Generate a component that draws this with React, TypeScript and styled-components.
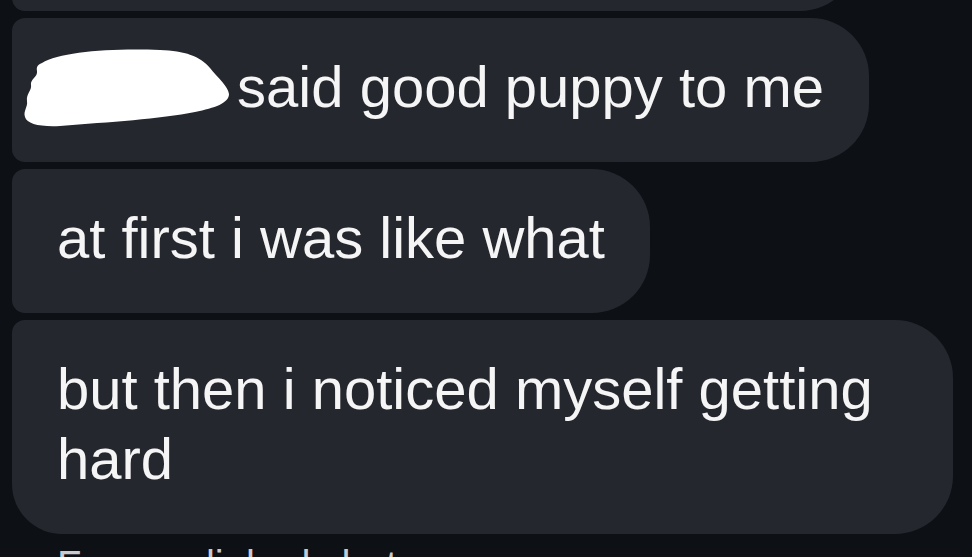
import React from "react";
import styled, { createGlobalStyle } from "styled-components";

const GlobalStyle = createGlobalStyle`
  html, body {
    margin: 0;
    padding: 0;
    background: #0d1015;
    overflow: hidden;
  }
  body {
    font-family: "Liberation Sans", Arial, sans-serif;
    -webkit-font-smoothing: antialiased;
  }
`;

const Thread = styled.div`
  display: flex;
  flex-direction: column;
  align-items: flex-start;
  gap: 7px;
  padding-left: 12px;
  width: 972px;
  height: 557px;
  box-sizing: border-box;
  overflow: hidden;

  & > * {
    flex-shrink: 0;
  }
`;

const Bubble = styled.div<{ $last?: boolean }>`
  position: relative;
  box-sizing: border-box;
  max-width: 941px;
  background: #25272e;
  color: #f5f5f6;
  font-size: 58px;
  line-height: 70px;
  padding: 34px 45px 40px 45px;
  border-radius: 13px 58px 58px ${(p) => (p.$last ? "50px" : "13px")};
`;

const CutBubble = styled(Bubble)`
  width: 846px;
  height: 144px;
  margin-top: -133px;
`;

const NameGap = styled.span`
  display: inline-block;
  width: 164px;
`;

const Blob = styled.svg`
  position: absolute;
  left: 8px;
  top: 27px;
  width: 215px;
  height: 85px;
`;

const Caption = styled.div`
  padding-left: 45px;
  font-size: 40px;
  line-height: 48px;
  color: #c9cace;
  white-space: nowrap;
`;

export default function App() {
  return (
    <>
      <GlobalStyle />
      <Thread>
        <CutBubble />
        <Bubble>
          <Blob viewBox="20 45 215 85" aria-hidden="true">
            <path
              d="M42 63 C60 52 110 48 160 50 C185 51 200 56 210 68 C218 78 228 86 229 94 C229 103 215 108 195 112 C160 119 110 122 60 126 C40 127 27 124 25 117 C23 111 28 107 27 101 C26 94 32 90 31 85 C30 79 38 77 37 71 C36 66 39 64 42 63 Z"
              fill="#ffffff"
            />
          </Blob>
          <NameGap /> said good puppy to me
        </Bubble>
        <Bubble>at first i was like what</Bubble>
        <Bubble $last>but then i noticed myself getting hard</Bubble>
        <Caption>From unlinked chat</Caption>
      </Thread>
    </>
  );
}
